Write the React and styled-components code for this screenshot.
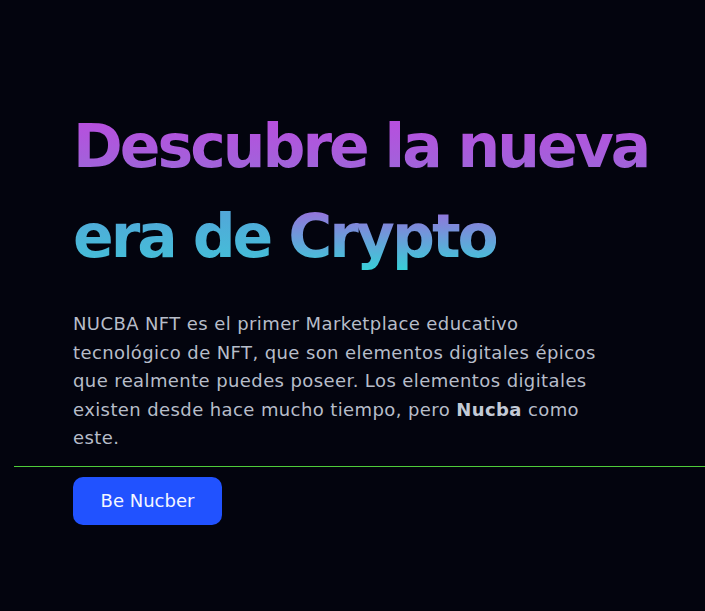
import React from 'react';
import styled, { createGlobalStyle } from 'styled-components';

const GlobalStyle = createGlobalStyle`
  html, body {
    margin: 0;
    padding: 0;
    background: #03040e;
  }
  body {
    font-family: "DejaVu Sans", "Noto Sans", sans-serif;
  }
`;

const Page = styled.main`
  min-height: 611px;
  background: #03040e;
  padding-top: 101px;
  box-sizing: border-box;
`;

const Content = styled.section`
  padding-left: 73px;
`;

const Title = styled.h1`
  margin: 0;
  font-family: "DejaVu Sans", sans-serif;
  font-size: 60px;
  font-weight: 700;
  line-height: 90px;
  letter-spacing: -3px;
  white-space: nowrap;
`;

const Gradient = styled.span`
  background: linear-gradient(180deg, ${(p) => p.from}, ${(p) => p.to});
  -webkit-background-clip: text;
  background-clip: text;
  color: transparent;
`;

const Text = styled.p`
  margin: 29px 0 0;
  max-width: 530px;
  font-size: 18px;
  line-height: 28.5px;
  letter-spacing: 0.4px;
  color: #b7bdc9;
  b {
    font-weight: 700;
    color: #c3cad6;
  }
`;

const Divider = styled.hr`
  margin: 13px 0 0 14px;
  border: 0;
  height: 1px;
  background: #4fcc3a;
`;

const Actions = styled.div`
  padding: 10px 0 0 73px;
`;

const Button = styled.button`
  width: 149px;
  height: 48px;
  border: 0;
  border-radius: 10px;
  background: #2152ff;
  color: #f4f6ff;
  font-family: "DejaVu Sans", sans-serif;
  font-size: 18px;
  cursor: pointer;
`;

export default function App() {
  return (
    <Page>
      <GlobalStyle />
      <Content>
        <Title>
          <Gradient from="#bc4adf" to="#9a69d9">Descubre la nueva</Gradient>
          <br />
          <Gradient from="#55a2d9" to="#42c3d8">era de </Gradient>
          <Gradient from="#a563dc" to="#36d1d8">Crypto</Gradient>
        </Title>
        <Text>
          NUCBA NFT es el primer Marketplace educativo tecnológico de NFT, que son
          elementos digitales épicos que realmente puedes poseer. Los elementos
          digitales existen desde hace mucho tiempo, pero <b>Nucba</b> como este.
        </Text>
      </Content>
      <Divider />
      <Actions>
        <Button>Be Nucber</Button>
      </Actions>
    </Page>
  );
}
